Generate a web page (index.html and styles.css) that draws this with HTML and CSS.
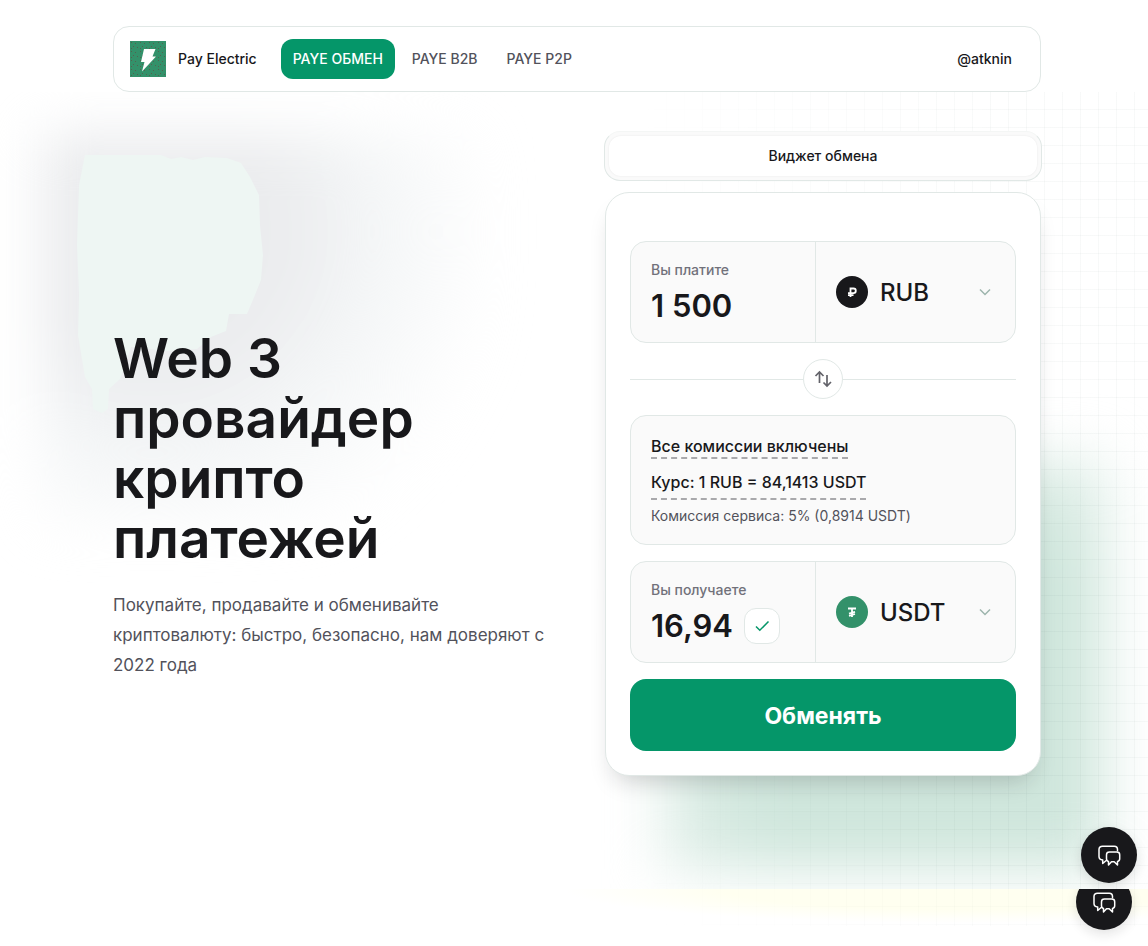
FILE: index.html
```html
<!DOCTYPE html>
<html lang="ru">
<head>
<meta charset="utf-8">
<meta name="viewport" content="width=device-width, initial-scale=1">
<title>Pay Electric</title>
<link rel="stylesheet" href="styles.css">
</head>
<body>
<svg class="sprite" aria-hidden="true">
  <symbol id="chat" viewBox="0 0 24 24">
    <path d="M20.500 7.500V6.500c0-2-1.200-3.300-3.200-3.300H5.500C3.200 3.200 2 4.500 2 6.500v7c0 2 1.200 3.200 3.700 3.500v3.500l3.500-3M12.500 9h7.300c2 0 2.900 1 2.900 2.700v4.100c0 1.600-.7 2.400-2.200 2.700V22l-3.300-3.300h-2.700L11.500 22v-3.500c-1.500-.3-2-1.200-2-2.700v-4.100c0-1.700 1-2.700 3-2.700Z"/>
  </symbol>
  <symbol id="chevron" viewBox="0 0 12 12"><path d="m1 3.500 5 5 5-5"/></symbol>
</svg>
<div class="page">
  <header class="header">
    <a class="brand" href="#">
      <svg class="logo" viewBox="0 0 36 36" aria-hidden="true">
        <defs><pattern id="dots" width="9" height="9" patternUnits="userSpaceOnUse"><path d="M1 1h1v1H1zM5 2h1v1H5zM3 5h1v1H3zM7 6h1v1H7zM1 7h1v1H1z" fill="#55614f"/></pattern></defs>
        <rect width="36" height="36" fill="#33916a"/><rect width="36" height="36" fill="url(#dots)"/>
        <path d="M14 8h11.500l-3 7.500H26L12 30.500l2.500-9.500H11Z" fill="#fff"/>
      </svg>
      <span>Pay Electric</span>
    </a>
    <nav class="nav">
      <a class="nav-link active" href="#">PAYE ОБМЕН</a>
      <a class="nav-link" href="#">PAYE B2B</a>
      <a class="nav-link" href="#">PAYE P2P</a>
    </nav>
    <a class="account" href="#">@atknin</a>
  </header>
  <main class="stage">
    <div class="backdrop" aria-hidden="true">
      <div class="glow gray"></div>
      <svg class="mint" viewBox="0 0 200 260"><path d="M8 0H84L94 4 104 2 116 5 128 2 150 3 164 8 173 22 182 40 183 70 186 100 184 125 178 140 170 159H152L149 176 134 182 120 194 90 196 54 192 43 224 32 234 31 254 25 258 16 254 15 234 8 222 1 180 2 140 0 90 2 30Z"/></svg>
      <div class="glow green"></div>
      <div class="grid"></div>
    </div>
    <div class="columns">
      <section class="hero">
        <h1>Web 3 провайдер крипто платежей</h1>
        <p>Покупайте, продавайте и обменивайте криптовалюту: быстро, безопасно, нам доверяют с 2022 года</p>
      </section>
      <section class="exchange">
        <div class="tabs"><button class="tab" type="button">Виджет обмена</button></div>
        <form class="card">
          <div class="field">
            <div class="amount">
              <label for="pay">Вы платите</label>
              <div class="value-row"><input id="pay" type="text" value="1 500"></div>
            </div>
            <div class="currency">
              <svg class="coin" viewBox="0 0 32 32" aria-hidden="true"><circle cx="16" cy="16" r="16" fill="#18181b"/><path d="M14.500 21v-8.500h3a2.300 2.300 0 0 1 0 4.600h-5.500M12 19.200h5.500"/></svg>
              <select aria-label="Валюта оплаты"><option>RUB</option></select>
              <svg class="chevron" aria-hidden="true"><use href="#chevron"/></svg>
            </div>
          </div>
          <div class="divider">
            <button class="swap" type="button" aria-label="Поменять валюты">
              <svg viewBox="0 0 20 20" aria-hidden="true"><path d="M6.500 14V3M2.500 7l4-4 4 4M14 6v11M10.500 13.500 14 17l4-4"/></svg>
            </button>
          </div>
          <div class="fees">
            <span class="fee-note">Все комиссии включены</span>
            <span class="fee-rate">Курс: 1 RUB = 84,1413 USDT</span>
            <span class="fee-service">Комиссия сервиса: 5% (0,8914 USDT)</span>
          </div>
          <div class="field">
            <div class="amount">
              <label for="get">Вы получаете</label>
              <div class="value-row">
                <input id="get" class="short" type="text" value="16,94">
                <button class="confirm" type="button" aria-label="Подтвердить"><svg viewBox="0 0 16 16" aria-hidden="true"><path d="m2 8.500 3.800 3.800L14.500 3.500"/></svg></button>
              </div>
            </div>
            <div class="currency">
              <svg class="coin" viewBox="0 0 32 32" aria-hidden="true"><circle cx="16" cy="16" r="16" fill="#33916a"/><path d="M12 12.500h8M16 12.500v8.500M13 17.600l6-1.800M13 19.800l6-1.800" /></svg>
              <select aria-label="Валюта получения"><option>USDT</option></select>
              <svg class="chevron" aria-hidden="true"><use href="#chevron"/></svg>
            </div>
          </div>
          <button class="submit" type="submit">Обменять</button>
        </form>
      </section>
    </div>
    <button class="chat" type="button" aria-label="Чат"><svg><use href="#chat"/></svg></button>
  </main>
  <footer class="strip">
    <div class="grid" aria-hidden="true"></div>
    <button class="chat lower" type="button" aria-label="Чат поддержки"><svg><use href="#chat"/></svg></button>
  </footer>
</div>
</body>
</html>
```
FILE: styles.css
```css
* { box-sizing: border-box; }
body {
  margin: 0;
  background: #fff;
  color: #18181b;
  font: 500 14px/20px Inter, "Liberation Sans", sans-serif;
}
a { color: inherit; text-decoration: none; }
button, input, select { font: inherit; color: inherit; margin: 0; padding: 0; border: 0; background: none; }
button { cursor: pointer; }
svg { display: block; fill: none; flex: none; }
.sprite { position: absolute; width: 0; height: 0; }
.page { min-height: 100vh; display: flex; flex-direction: column; overflow: hidden; }

.header {
  display: flex;
  align-items: center;
  margin: 26px 107px 0 113px;
  padding: 12px 28px 12px 16px;
  border: 1px solid #e1e8e6;
  border-radius: 16px;
  background: #fff;
}
.brand { display: flex; align-items: center; gap: 12px; margin-right: 24px; }
.logo { width: 36px; height: 36px; }
.nav { display: flex; gap: 5px; }
.nav-link { padding: 10px 12px; border-radius: 12px; color: #52525b; }
.nav-link.active { background: #059669; color: #fff; }
.account { margin-left: auto; }

.stage { position: relative; padding: 39px 107px 113px 113px; }
.backdrop { position: absolute; inset: 0; overflow: hidden; }
.glow { position: absolute; }
.glow.gray {
  left: 42px; top: 42px; width: 440px; height: 390px;
  background: radial-gradient(circle at 25% 25%, #ebecee 30%, #f4f6f7 50%, rgba(255,255,255,0) 80%);
  filter: blur(26px);
}
.mint { position: absolute; left: 70px; top: 63px; width: 214px; height: 260px; }
.mint path { fill: #eef6f3; }
.glow.green {
  right: 45px; bottom: 20px; width: 440px; height: 410px;
  background: radial-gradient(ellipse at 80% 80%, #cfe6dc 50%, #e1efe9 72%, rgba(244,246,247,0) 100%);
  filter: blur(28px);
}
.grid {
  position: absolute; inset: 0 0 0 50%;
  background:
    linear-gradient(90deg, rgba(24,60,48,.03) 1px, transparent 1px) 2px 0 / 18px 18px,
    linear-gradient(rgba(24,60,48,.03) 1px, transparent 1px) 0 17px / 18px 18px;
  -webkit-mask-image: linear-gradient(90deg, transparent 10%, #000 75%);
  mask-image: linear-gradient(90deg, transparent 10%, #000 75%);
}

.columns {
  position: relative;
  display: grid;
  grid-template-columns: minmax(0, 1fr) minmax(0, 436px);
  gap: 48px;
}
.hero { align-self: center; padding-top: 100px; }
h1 { margin: 0 0 22px; max-width: 340px; font-size: 55px; line-height: 60px; font-weight: 600; }
.hero p { margin: 0; font-size: 17px; line-height: 30px; font-weight: 400; color: #52525b; }

.tabs {
  display: flex;
  margin: 0 -1px 11px;
  padding: 4px;
  border: 1px solid #e1e8e6;
  border-top-color: #f4f6f5;
  border-radius: 16px;
  background: #fafafa;
}
.tab { flex: 1; padding: 10px; border-radius: 12px; background: #fff; box-shadow: 0 0 2px rgba(24,24,27,.08); }
.card {
  display: flex;
  flex-direction: column;
  gap: 16px;
  padding: 48px 24px 24px;
  border: 1px solid #e1e8e6;
  border-radius: 24px;
  background: #fff;
  box-shadow: 0 14px 24px -10px rgba(24,24,27,.22);
}
.field, .fees { border: 1px solid #e1e8e6; border-radius: 16px; background: #fafafa; }
.field { display: grid; grid-template-columns: 185px minmax(0, 1fr); height: 102px; }
.amount { padding: 18px 20px; border-right: 1px solid #e1e8e6; }
.amount label { display: block; color: #71717a; }
.value-row { display: flex; align-items: center; gap: 8px; margin-top: 8px; }
.amount input { display: block; width: 100%; height: 36px; font-size: 31px; line-height: 36px; font-weight: 600; }
.amount input.short { width: 85px; }
.confirm {
  display: grid; place-items: center; flex: none;
  width: 36px; height: 36px;
  border: 1px solid #e1e8e6; border-radius: 12px; background: #fff;
}
.confirm svg { width: 16px; height: 16px; stroke: #059669; stroke-width: 1.500; }
.currency { display: flex; align-items: center; gap: 12px; padding: 0 24px 0 20px; }
.coin { width: 32px; height: 32px; stroke: #fff; stroke-width: 1.800; }
.coin circle { stroke: none; }
.currency select { flex: 1; min-width: 0; appearance: none; padding-top: 2px; font-size: 24px; line-height: 32px; }
.chevron { width: 12px; height: 12px; stroke: #9db5ad; stroke-width: 1.500; }
.divider { display: flex; align-items: center; }
.divider::before, .divider::after { content: ""; flex: 1; height: 1px; background: #e1e8e6; }
.swap {
  display: grid; place-items: center;
  width: 40px; height: 40px;
  border: 1px solid #e1e8e6; border-radius: 50%;
}
.swap svg { width: 20px; height: 20px; stroke: #63636a; stroke-width: 1.700; }
.fees { display: flex; flex-direction: column; align-items: flex-start; padding: 20px 20px 18px; }
.fee-note, .fee-rate { font-size: 16px; border-bottom: 2px dashed #a9a9ac; }
.fee-note { line-height: 21px; margin-bottom: 8px; }
.fee-rate { line-height: 31px; margin-bottom: 6px; }
.fee-service { font-weight: 400; color: #52525b; }
.submit { padding: 21px 20px 19px; border-radius: 16px; background: #059669; color: #fff; font-size: 23px; line-height: 32px; font-weight: 700; }

.chat {
  position: absolute; right: 11px; bottom: 6px;
  display: grid; place-items: center;
  width: 56px; height: 56px;
  border-radius: 50%; background: #18181b;
  box-shadow: 0 4px 12px rgba(24,24,27,.12);
}
.chat svg { width: 24px; height: 24px; stroke: #fff; stroke-width: 1.500; stroke-linejoin: round; stroke-linecap: round; }
.strip {
  position: relative; flex: 1; min-height: 57px; overflow: hidden;
  background: radial-gradient(ellipse 400px 34px at 84% 0, #fffff0 60%, #fff 100%);
}
.strip .grid { bottom: 20px; opacity: .6; }
.chat.lower { right: 16px; bottom: 16px; }
```
